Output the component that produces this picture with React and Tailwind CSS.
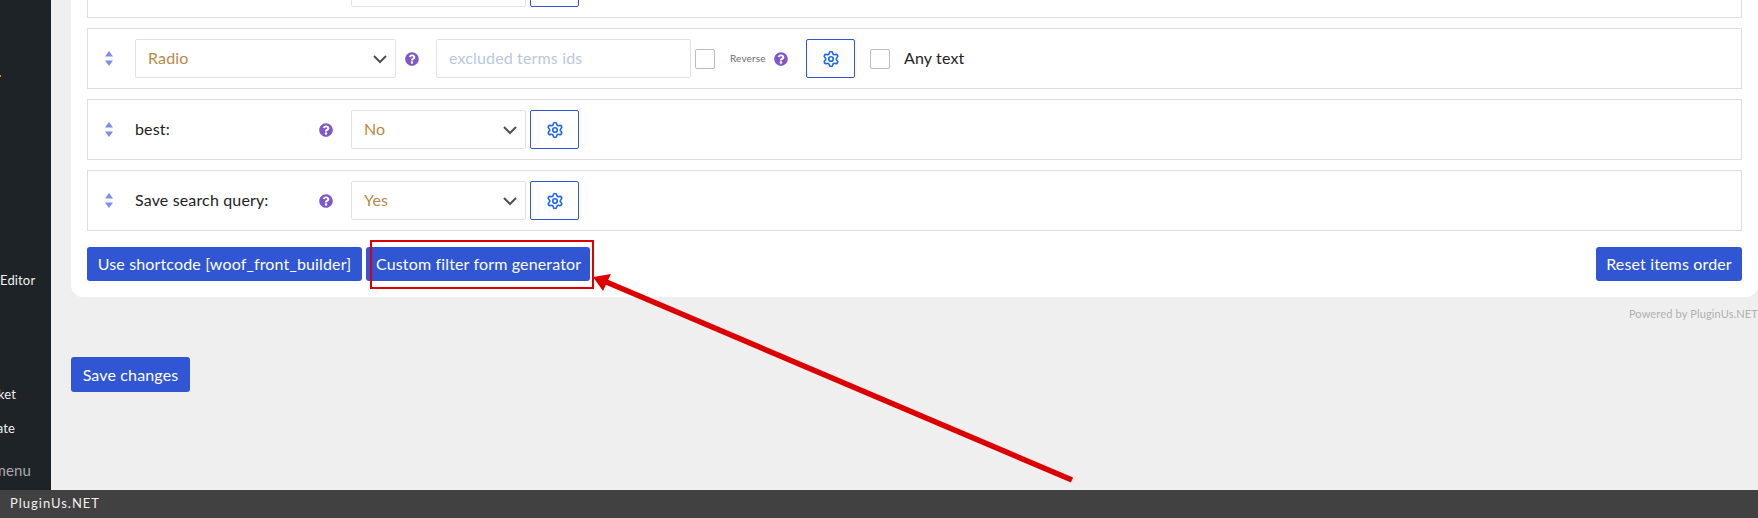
import React from "react";
import { Settings } from "lucide-react";
import { FaQuestionCircle } from "react-icons/fa";

const Sorter = () => (
  <svg width="8" height="15" viewBox="0 0 8 15" className="shrink-0" fill="#7b8fe8">
    <path d="M4 0L8 5.5H0Z" />
    <path d="M4 15L8 9.5H0Z" />
  </svg>
);

const Help = ({ className = "" }) => (
  <FaQuestionCircle size={14} color="#7e57c9" className={`shrink-0 ${className}`} />
);

const Select = ({ value, className }) => (
  <div className={`flex h-[39px] items-center justify-between rounded-[2px] border border-[#e2e2e2] bg-white pl-[12px] pr-[8px] text-[#b88a45] ${className}`}>
    <span className="pb-[2px]">{value}</span>
    <svg width="14" height="9" viewBox="0 0 14 9" fill="none" stroke="#505050" strokeWidth="2" className="mt-[2px]">
      <path d="M1 1l6 6 6-6" />
    </svg>
  </div>
);

const GearButton = ({ className = "" }) => (
  <button className={`flex h-[39px] w-[49px] shrink-0 items-center justify-center rounded-[2px] border border-[#3056d3] bg-white ${className}`}>
    <Settings size={18} color="#1f66f0" strokeWidth={2.2} />
  </button>
);

const Checkbox = ({ className = "" }) => (
  <span className={`h-[20px] w-[20px] shrink-0 rounded-[2px] border border-[#bdbdbd] bg-white ${className}`}></span>
);

const Row = ({ children }) => (
  <div className="flex h-[61px] items-center border border-[#dedede] bg-white pl-[17px]">
    <Sorter />
    {children}
  </div>
);

const OptionRow = ({ label, value }) => (
  <Row>
    <span className="ml-[22px] w-[184px] shrink-0 pb-[2px] text-[#1d2327]">{label}</span>
    <Help />
    <Select value={value} className="ml-[18px] w-[175px]" />
    <GearButton className="ml-[4px]" />
  </Row>
);

const BlueButton = ({ children, className = "" }) => (
  <button className={`h-[34px] whitespace-nowrap rounded-[3px] bg-[#3056d3] px-[10px] text-white ${className}`}>
    {children}
  </button>
);

export default function App() {
  return (
    <div className="relative flex h-[518px] flex-col overflow-hidden bg-[#efefef] font-['Lato','Open_Sans',sans-serif] text-[16px] tracking-[0.15px]">
      <div className="flex min-h-0 flex-1">
        {/* cut off admin menu */}
        <aside className="flex w-[51px] shrink-0 flex-col items-end overflow-hidden bg-[#1d2327] text-[13px] leading-[18px] text-[#f0f0f1]">
          <span className="mt-[75px] h-[2px] w-[1px] self-start bg-[#f18500]"></span>
          <span className="mt-[194px] self-start whitespace-nowrap">Editor</span>
          <span className="mt-[96px] mr-[35px] whitespace-nowrap">Market</span>
          <span className="mt-[16px] mr-[36px] whitespace-nowrap">Update</span>
          <span className="mt-[24px] mr-[20px] whitespace-nowrap text-[15px] text-[#a7aaad]">Collapse menu</span>
        </aside>

        <main className="min-w-0 flex-1 pl-[20px]">
          <div className="-mt-[43px] rounded-b-[12px] bg-white px-[16px] pb-[16px]">
            <div className="flex flex-col gap-[10px]">
              <OptionRow label="" value="" />
              <Row>
                <Select value="Radio" className="ml-[22px] w-[261px]" />
                <Help className="ml-[9px]" />
                <input
                  placeholder="excluded terms ids"
                  className="ml-[17px] h-[39px] w-[255px] rounded-[2px] border border-[#e2e2e2] px-[12px] pb-[2px] outline-none placeholder:text-[#b9c8de]"
                />
                <Checkbox className="ml-[4px]" />
                <span className="ml-[15px] w-[35px] shrink-0 whitespace-nowrap text-[10px] text-[#6b6b6b]">Reverse</span>
                <Help className="ml-[9px]" />
                <GearButton className="ml-[18px]" />
                <Checkbox className="ml-[15px]" />
                <span className="ml-[14px] pb-[1px] text-[#1d2327]">Any text</span>
              </Row>
              <OptionRow label="best:" value="No" />
              <OptionRow label="Save search query:" value="Yes" />
            </div>

            <div className="mt-[16px] flex gap-[4px]">
              <BlueButton className="w-[275px]">Use shortcode [woof_front_builder]</BlueButton>
              <BlueButton className="w-[224px]">Custom filter form generator</BlueButton>
              <BlueButton className="ml-auto w-[146px]">Reset items order</BlueButton>
            </div>
          </div>

          <p className="mt-[10px] text-right text-[11px] leading-[14px] text-[#b0b0b0]">Powered by PluginUs.NET</p>

          <BlueButton className="mt-[36px] !h-[35px] w-[119px]">Save changes</BlueButton>
        </main>
      </div>

      <footer className="flex h-[28px] shrink-0 items-center bg-[#414141] px-[10px] text-[13px] tracking-[1px] text-[#f0f0f0]">
        PluginUs.NET
      </footer>

      {/* red annotation drawn on top of the screenshot */}
      <div className="absolute left-[370px] top-[240px] h-[49px] w-[224px] border-2 border-[#dd0000]"></div>
      <svg width="1758" height="518" className="pointer-events-none absolute left-0 top-0">
        <path d="M1072 480L604 281" stroke="#dd0000" strokeWidth="5.5" fill="none" />
        <path d="M593 277L611 274L603 291Z" fill="#dd0000" />
      </svg>
    </div>
  );
}
